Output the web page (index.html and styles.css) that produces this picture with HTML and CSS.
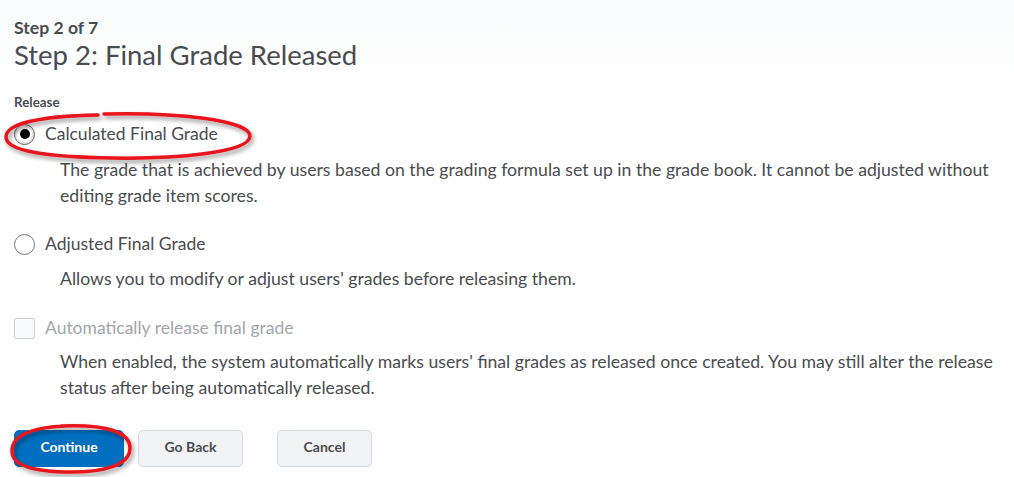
FILE: index.html
```html
<!DOCTYPE html>
<html lang="en">
<head>
<meta charset="utf-8">
<title>Step 2: Final Grade Released</title>
<link rel="stylesheet" href="styles.css">
</head>
<body>
<main class="page">
  <header class="head">
    <div class="eyebrow">Step 2 of 7</div>
    <h1 class="title">Step 2: Final Grade Released</h1>
  </header>

  <div class="field-label">Release</div>

  <div class="option">
    <span class="radio checked"></span>
    <span class="opt-label">Calculated Final Grade</span>
    <svg class="mark mark-radio" width="260" height="60" viewBox="0 0 260 60">
      <defs>
        <filter id="sh1" x="-10%" y="-30%" width="120%" height="170%">
          <feDropShadow dx="2" dy="3" stdDeviation="2" flood-color="#000" flood-opacity="0.4"/>
        </filter>
      </defs>
      <path filter="url(#sh1)" d="M101 5 C 172 3, 247 11, 247 27 C 247 44, 170 50, 110 49 C 48 48, 3 43, 3 28 C 3 14, 40 7, 95 6" fill="none" stroke="#e8141b" stroke-width="3.5" stroke-linecap="round"/>
    </svg>
  </div>
  <p class="desc">The grade that is achieved by users based on the grading formula set up in the grade book. It cannot be adjusted without editing grade item scores.</p>

  <div class="option">
    <span class="radio"></span>
    <span class="opt-label">Adjusted Final Grade</span>
  </div>
  <p class="desc desc-2">Allows you to modify or adjust users' grades before releasing them.</p>

  <div class="option option-3">
    <span class="checkbox"></span>
    <span class="opt-label disabled">Automatically release final grade</span>
  </div>
  <p class="desc desc-3">When enabled, the system automatically marks users' final grades as released once created. You may still alter the release status after being automatically released.</p>

  <div class="actions">
    <button class="btn primary" type="button">Continue
      <svg class="mark mark-btn" width="130" height="60" viewBox="0 0 130 60">
        <defs>
          <filter id="sh2" x="-20%" y="-30%" width="140%" height="170%">
            <feDropShadow dx="2" dy="3" stdDeviation="2" flood-color="#000" flood-opacity="0.4"/>
          </filter>
        </defs>
        <path filter="url(#sh2)" d="M52 3 C 97 1, 121 9, 121 25 C 121 42, 96 49, 62 49 C 26 49, 3 43, 3 28 C 3 12, 24 4, 57 3" fill="none" stroke="#e8141b" stroke-width="3.5" stroke-linecap="round"/>
      </svg>
    </button>
    <button class="btn" type="button">Go Back</button>
    <button class="btn btn-cancel" type="button">Cancel</button>
  </div>
</main>
</body>
</html>
```

FILE: styles.css
```css
html, body {
  margin: 0;
  padding: 0;
}
body {
  background: linear-gradient(to bottom, #f9fafb 0px, #ffffff 90px);
  font-family: Lato, "Open Sans", "Noto Sans", sans-serif;
  color: #494c4e;
  min-height: 477px;
}
.page {
  padding: 18px 14px 0 14px;
}
.head {
  display: flex;
  flex-direction: column;
}
.eyebrow {
  font-size: 17.6px;
  font-weight: 700;
  line-height: 20px;
  color: #494c4e;
}
.title {
  margin: 1px 0 0 0;
  font-size: 27.5px;
  font-weight: 400;
  line-height: 32px;
  color: #494c4e;
}
.field-label {
  margin-top: 23px;
  font-size: 13.4px;
  font-weight: 700;
  line-height: 16px;
}
.option {
  position: relative;
  display: flex;
  align-items: center;
  gap: 10px;
  height: 26px;
  margin-top: 11px;
}
.radio {
  box-sizing: border-box;
  width: 21px;
  height: 21px;
  border: 1px solid #6e7376;
  border-radius: 50%;
  background: #fff;
  display: flex;
  align-items: center;
  justify-content: center;
  flex: none;
}
.radio.checked {
  border-color: #5e5e5e;
  box-shadow: inset 0 0 0 2px #e6e6e6;
}
.radio.checked::after {
  content: "";
  width: 10px;
  height: 10px;
  border-radius: 50%;
  background: #000;
}
.checkbox {
  box-sizing: border-box;
  width: 21px;
  height: 21px;
  border: 1px solid #cdd1d5;
  border-radius: 2px;
  background: #f9fafb;
  flex: none;
}
.opt-label {
  font-size: 17.5px;
  line-height: 26px;
}
.opt-label.disabled {
  color: #a2a6a9;
}
.desc {
  margin: 10px 0 0 0;
  padding-left: 46px;
  font-size: 17.65px;
  line-height: 26px;
}
.desc + .option {
  margin-top: 22px;
}
.desc.desc-2 {
  margin-top: 9px;
}
.desc-2 + .option {
  margin-top: 23px;
}
.desc.desc-3 {
  margin-top: 8px;
}
.actions {
  display: flex;
  margin-top: 29px;
}
.btn {
  position: relative;
  box-sizing: border-box;
  height: 37px;
  padding: 0 0 4px 0;
  border: 1px solid #d3d9e3;
  border-radius: 5px;
  background: #f1f3f5;
  color: #494c4e;
  font-family: Lato, "Open Sans", sans-serif;
  font-size: 14px;
  font-weight: 700;
  margin-right: 14px;
  width: 105px;
}
.btn.primary {
  width: 110px;
  background: #006fbf;
  border-color: #006fbf;
  color: #fff;
}
.btn.btn-cancel {
  width: 95px;
  margin-left: 20px;
}
.mark {
  position: absolute;
  pointer-events: none;
  overflow: visible;
}
.mark-radio {
  left: -11px;
  top: -12px;
}
.mark-btn {
  left: -6px;
  top: -8px;
}
```
